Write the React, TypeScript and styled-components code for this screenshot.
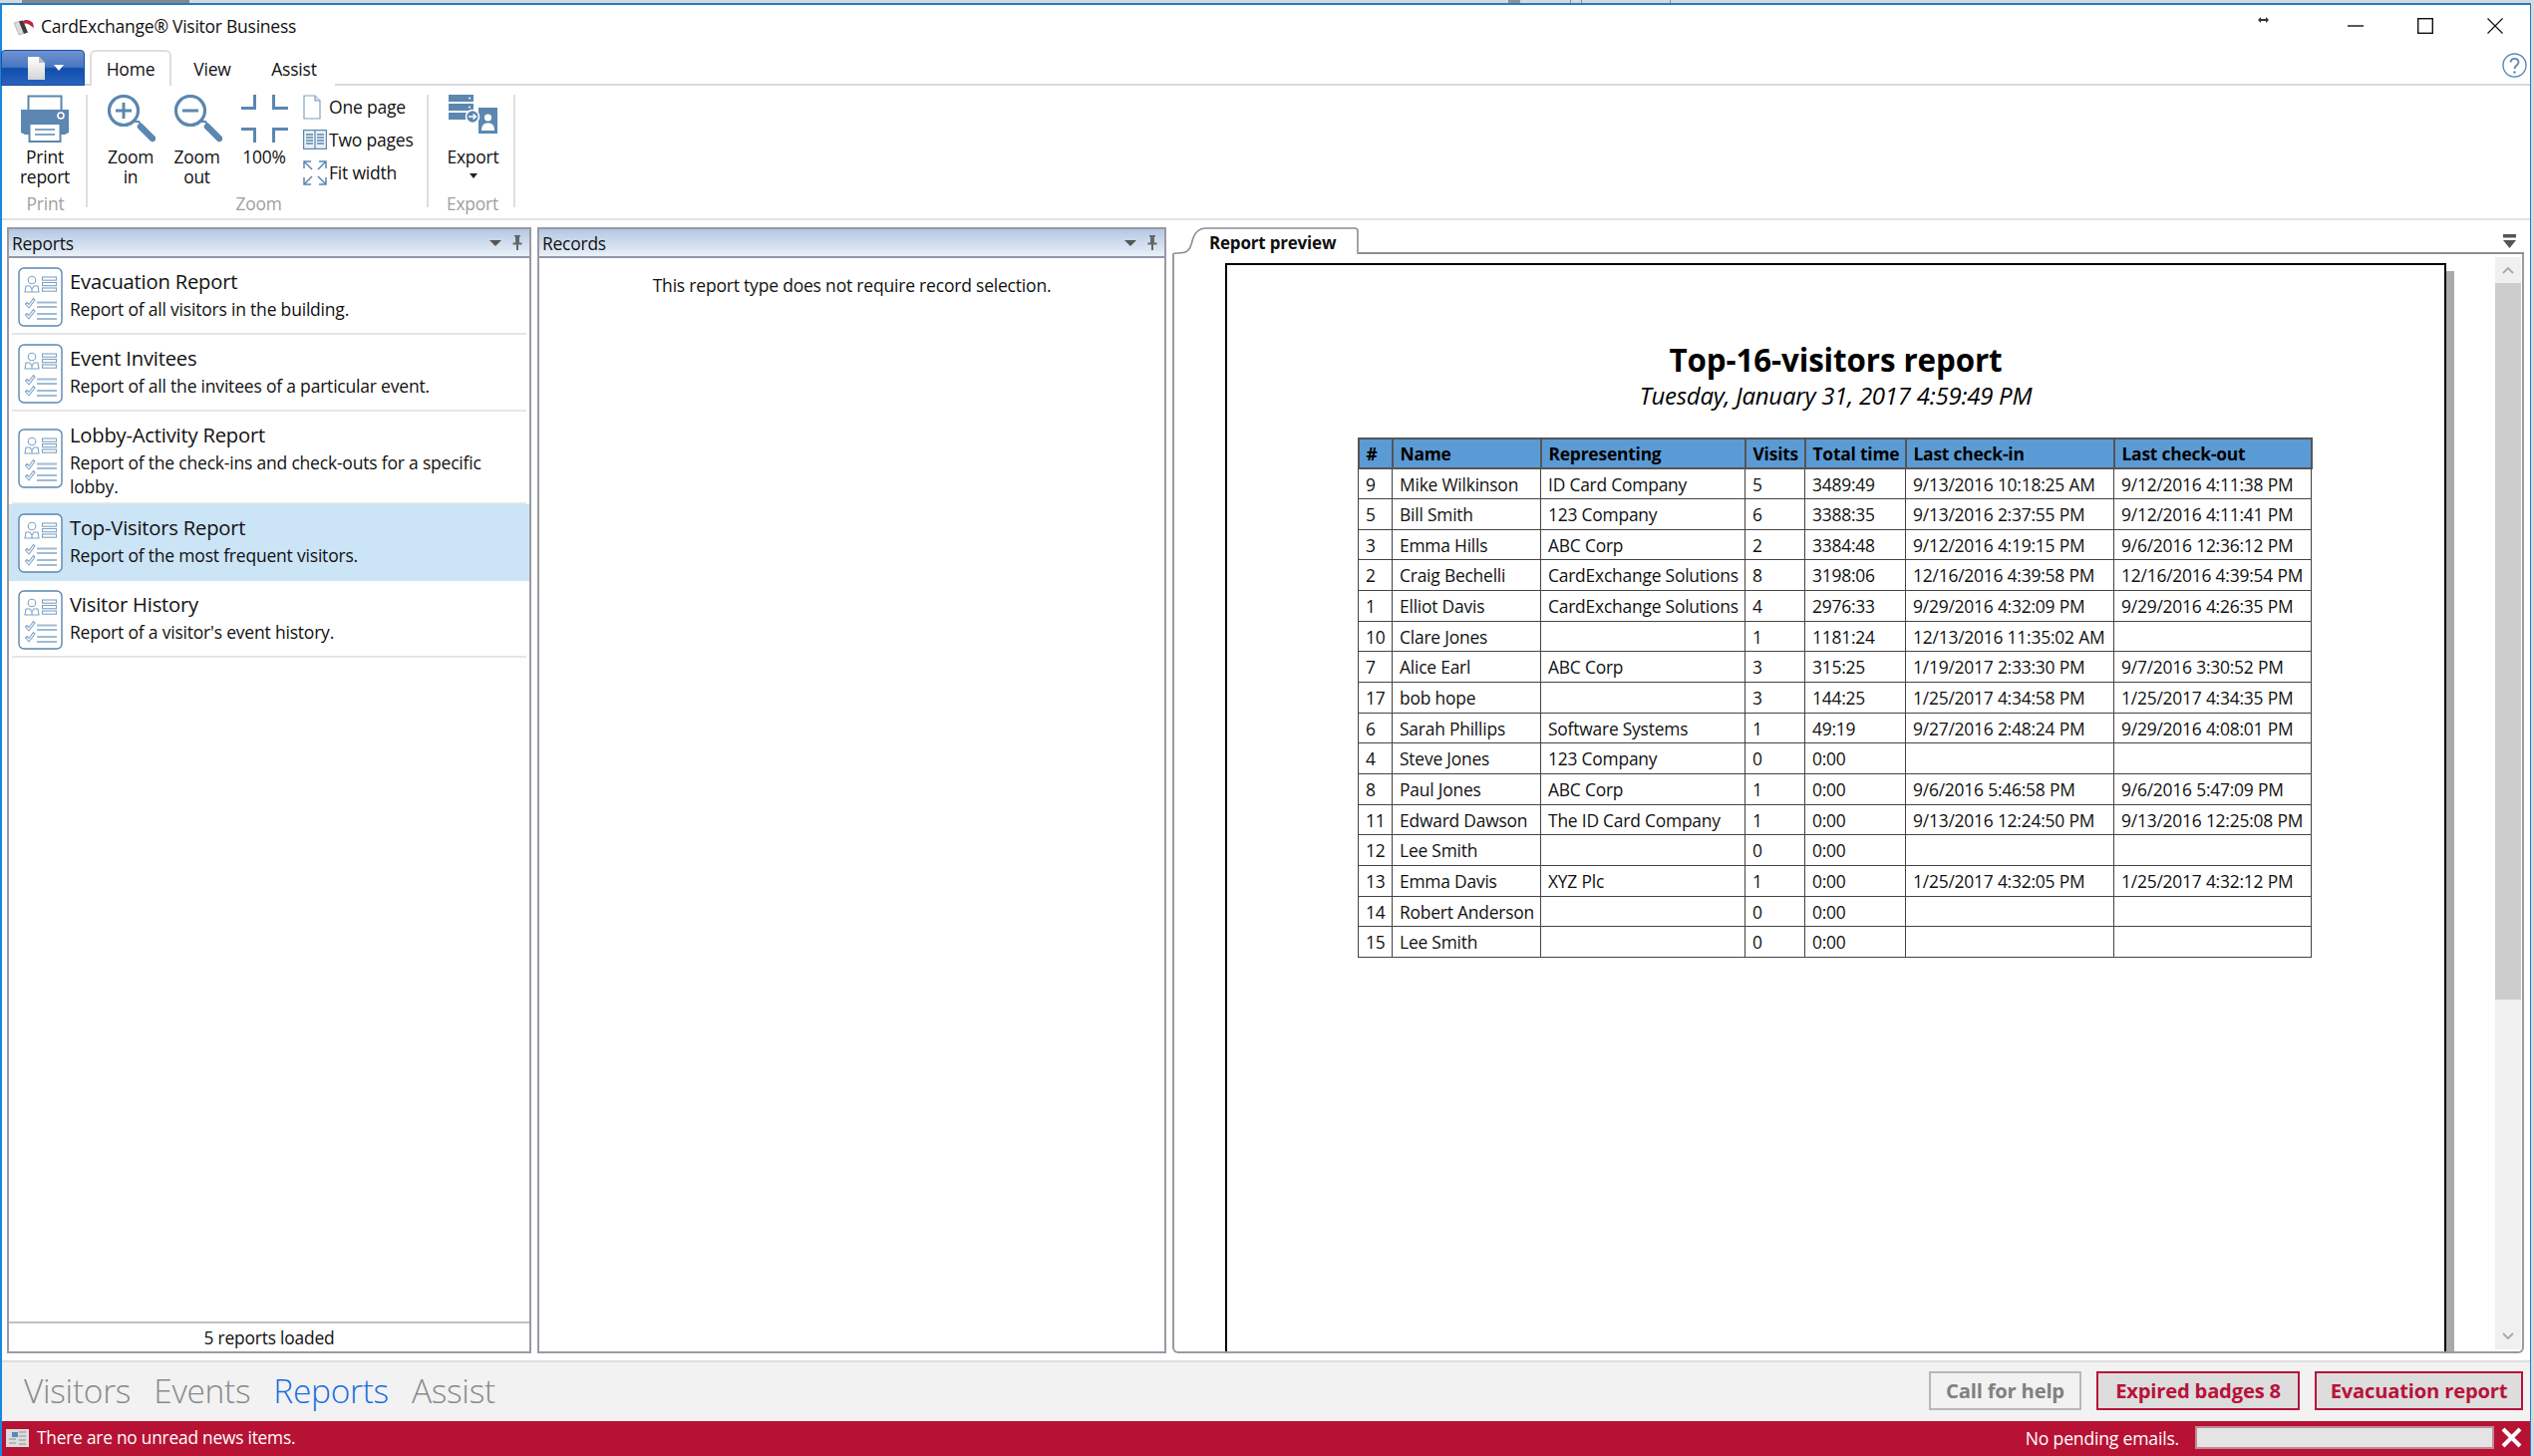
import React from 'react';
import styled, { createGlobalStyle } from 'styled-components';

const Global = createGlobalStyle`
  html, body { margin: 0; padding: 0; background: #dcdcdc; }
  * { box-sizing: border-box; }
`;

const BLUE = '#5b87b0';
const FONT = `"Open Sans", "Noto Sans", sans-serif`;

const Screen = styled.div`
  width: 2542px; height: 1461px; overflow: hidden;
  padding: 3px 3px 0 0;
  background-color: #d8d8d8;
  background-image: linear-gradient(90deg,
    transparent 22px, #868686 22px, #868686 190px, transparent 190px,
    transparent 1513px, #8f8f8f 1513px, #8f8f8f 1525px, transparent 1525px,
    transparent 1575px, #8f8f8f 1575px, #8f8f8f 1576px, transparent 1576px,
    transparent 1586px, #8f8f8f 1586px, #8f8f8f 1587px, transparent 1587px,
    transparent 1675px, #8f8f8f 1675px, #8f8f8f 1676px, transparent 1676px);
  background-size: 100% 3px;
  background-repeat: no-repeat;
  font-family: ${FONT};
  font-size: 17.4px;
  letter-spacing: -0.2px;
  color: #111;
`;
const Window = styled.div`
  height: 1458px;
  display: flex; flex-direction: column;
  background: #fff;
  border-top: 2px solid #1a7fd0;
  border-left: 2px solid #1a88e0;
  border-right: 1px solid #1a7fd0;
`;
const TitleBar = styled.div`
  height: 45px; flex: none;
  display: flex; align-items: center;
  padding-left: 11px;
`;
const TitleText = styled.div`
  margin-left: 6px; font-size: 17.5px; letter-spacing: -0.25px; flex: 1; padding-bottom: 3px;
`;
const DragGlyph = styled.div`
  margin-right: 52px; margin-top: -14px; height: 10px; display: flex;
`;
const WinButton = styled.div`
  width: 70px; height: 45px; padding-bottom: 4px;
  display: flex; align-items: center; justify-content: center;
`;
const TabRow = styled.div`
  height: 36px; flex: none; display: flex; align-items: flex-end;
  border-bottom: 2px solid #dadada;
`;
const AppButton = styled.div`
  margin-left: -1px; width: 84px; height: 36px; align-self: flex-start;
  border: 1px solid #1b4f9f; border-radius: 4px 4px 0 0;
  padding-left: 6px;
  background: linear-gradient(#6f93d1 0%, #4a75bf 48%, #0f4fae 52%, #2a62bd 100%);
  display: flex; align-items: center; justify-content: center; gap: 9px;
`;
const RibbonTab = styled.div<{ $active?: boolean }>`
  width: 82px; height: 35px; margin-bottom: -2px; font-size: 17.5px;
  display: flex; align-items: center; justify-content: center;
  background: #fff;
  ${p => p.$active ? `border: 2px solid #dedede; border-bottom: none; border-radius: 6px 6px 0 0; margin-left: 5px; height: 36px;` : ''}
`;
const HelpSlot = styled.div`
  margin-left: auto; margin-right: 3px; align-self: flex-start; margin-top: 3px; height: 25px;
`;
const Ribbon = styled.div`
  height: 135px; flex: none; display: flex; align-items: flex-start;
  padding-top: 9px;
  border-bottom: 2px solid #e2e2e2;
`;
const RibbonGroup = styled.div<{ $w: number }>`
  width: ${p => p.$w}px; height: 113px; flex: none;
  border-right: 2px solid #dedede;
  display: flex; flex-direction: column;
`;
const GroupBody = styled.div`
  flex: 1; display: flex; align-items: flex-start;
`;
const GroupLabel = styled.div`
  height: 16px; line-height: 24px; text-align: center; color: #a0a0a0; font-size: 17.4px; padding-left: 3px;
`;
const LargeButton = styled.div<{ $w: number }>`
  width: ${p => p.$w}px; flex: none;
  display: flex; flex-direction: column; align-items: center;
  line-height: 20px; text-align: center; font-size: 17.4px;
`;
const LargeIcon = styled.div`
  height: 52px; display: flex; align-items: flex-start; justify-content: center;
`;
const SmallStack = styled.div`
  margin-left: 5px; display: flex; flex-direction: column; gap: 9px;
`;
const SmallRow = styled.div`
  height: 24px; display: flex; align-items: center; font-size: 17.5px;
`;
const SmallIcon = styled.div`
  width: 26px; flex: none; display: flex; align-items: center; justify-content: flex-start;
`;
const ExportCaret = styled.div`
  width: 0; height: 0; margin: 7px auto 0;
  border-left: 4px solid transparent; border-right: 4px solid transparent; border-top: 5px solid #222;
`;
const Content = styled.div`
  flex: 1; min-height: 0; display: flex; gap: 6px;
  padding: 7px 6px 7px 5px;
`;
const Panel = styled.div<{ $w: number }>`
  width: ${p => p.$w}px; flex: none;
  display: flex; flex-direction: column;
  border: 2px solid #9a9aa4;
`;
const PanelHeader = styled.div`
  height: 29px; flex: none;
  display: flex; align-items: center;
  padding: 0 7px 0 3px;
  font-size: 17.4px;
  background: linear-gradient(#b4c8e2, #e9f0f9);
  border-bottom: 2px solid #8f97a6;
`;
const PanelTitle = styled.div` flex: 1; `;
const PanelGlyphs = styled.div` display: flex; align-items: center; gap: 11px; `;
const ReportList = styled.div` flex: 1; min-height: 0; `;
const ReportItem = styled.div<{ $selected?: boolean }>`
  position: relative;
  display: flex; align-items: center; gap: 7px;
  padding: 9px 10px 6px 9px;
  background: ${p => (p.$selected ? '#cbe4f6' : 'transparent')};
  &::after {
    content: ''; position: absolute; left: 3px; right: 3px; bottom: 0; height: 2px;
    background: ${p => (p.$selected ? 'transparent' : '#e6e6e6')};
  }
`;
const ReportGlyphBox = styled.div` flex: none; height: 62px; `;
const ReportText = styled.div` align-self: flex-start; padding-top: 1px; `;
const ReportName = styled.div` font-size: 20.2px; line-height: 26px; padding-bottom: 3px; `;
const ReportDesc = styled.div` font-size: 17.5px; line-height: 24px; `;
const PanelFooter = styled.div`
  height: 30px; flex: none; text-align: center; line-height: 28px; font-size: 17.4px;
  border-top: 2px solid #bfc0c4;
`;
const RecordsNote = styled.div`
  text-align: center; font-size: 17.5px; padding-top: 15px;
`;
const PreviewColumn = styled.div`
  flex: 1; min-width: 0; display: flex; flex-direction: column;
`;
const TabStrip = styled.div`
  height: 27px; flex: none; display: flex; align-items: flex-end; position: relative;
`;
const PreviewTab = styled.div`
  position: relative; width: 187px; height: 27px;
  font-weight: 700; font-size: 17px;
  padding: 4px 0 0 37px;
`;
const TabOutline = styled.svg`
  position: absolute; left: 0; top: 0;
`;
const TabLine = styled.div`
  flex: 1; height: 2px; background: #8c8c96;
`;
const OverflowSlot = styled.div`
  position: absolute; right: 8px; top: 2px; height: 14px;
`;
const PreviewBody = styled.div`
  flex: 1; min-height: 0; display: flex;
  border: 2px solid #9a9aa4; border-top: none;
  border-radius: 0 0 6px 6px;
`;
const PageArea = styled.div`
  flex: 1; min-width: 0; overflow: hidden; padding: 9px 0 0 51px;
`;
const Page = styled.div`
  width: 1225px; height: 1300px;
  border: 2px solid #000; border-bottom: none;
  box-shadow: 8px 8px 0 #aaaaaa;
  background: #fff;
  display: flex; flex-direction: column; align-items: center;
  padding-top: 75px;
`;
const PageTitle = styled.div`
  font-size: 31.3px; line-height: 40px; font-weight: 700; letter-spacing: -0.1px; color: #000;
`;
const PageDate = styled.div`
  font-size: 24px; line-height: 32px; font-style: italic; letter-spacing: -0.25px; margin-bottom: 26px; color: #000;
`;
const ReportTable = styled.table`
  border-collapse: collapse; table-layout: fixed; width: 956px;
  margin-right: 2px;
  font-size: 17.4px; color: #111;
`;
const Th = styled.th<{ $w: number }>`
  width: ${p => p.$w}px; height: 30px; padding: 0 0 0 7px;
  text-align: left; font-weight: 700; white-space: nowrap; color: #000;
  background: #5b9bd5;
  border: 2px solid #555;
`;
const Td = styled.td`
  height: 30.67px; padding: 0 0 0 7px; white-space: nowrap; overflow: hidden;
  border: 1.5px solid #444;
`;
const Scrollbar = styled.div`
  width: 26px; flex: none; margin: 3px 1px 2px 0;
  display: flex; flex-direction: column; background: #f0f0f0;
`;
const ScrollBtn = styled.div`
  height: 26px; flex: none; display: flex; align-items: center; justify-content: center;
`;
const ScrollThumb = styled.div`
  height: 719px; flex: none; background: #cdcdcd;
`;
const ScrollTrack = styled.div` flex: 1; `;
const BottomBar = styled.div`
  height: 61px; flex: none;
  display: flex; align-items: center;
  background: #f2f2f2;
  border-top: 2px solid #dedede;
  padding: 0 7px 3px 22px;
`;
const NavItem = styled.div<{ $active?: boolean }>`
  font-size: 33.5px; font-weight: 300; margin-right: 23px; letter-spacing: -0.3px;
  color: ${p => (p.$active ? '#1a6ee0' : '#8a8a8a')};
`;
const Spacer = styled.div` flex: 1; `;
const ActionButton = styled.div<{ $alert?: boolean; $w: number }>`
  width: ${p => p.$w}px; height: 39px; margin-left: 15px;
  display: flex; align-items: center; justify-content: center;
  font-size: 20.2px; font-weight: 700; letter-spacing: -0.2px;
  color: ${p => (p.$alert ? '#b8123a' : '#808080')};
  background: ${p => (p.$alert ? '#dddddd' : '#f2f2f2')};
  border: 2px solid ${p => (p.$alert ? '#b8123a' : '#b8b8b8')};
`;
const StatusBar = styled.div`
  height: 35px; flex: none;
  display: flex; align-items: center;
  background: #b71234; color: #fff; font-size: 17.3px;
  padding: 0 8px 2px 4px;
`;
const StatusIcon = styled.div` width: 31px; height: 18px; display: flex; `;
const StatusRight = styled.div` margin-left: auto; margin-right: 16px; font-size: 17.6px; `;
const Progress = styled.div`
  width: 300px; height: 23px; background: #e4e4e4; border: 2px solid #c08a96; margin-right: 7px;
`;

const Logo = () => (
  <svg width="22" height="17" viewBox="0 0 22 17">
    <path d="M1 4 L7 2 L12 14 L6 16 Z" fill="#dcdcdc" stroke="#a0a0a0" strokeWidth=".6" />
    <path d="M6 2.5 L10 1.5 L15 13.5 L11 15 Z" fill="#3d3d3d" />
    <path d="M10 2 C13 0 17 1 20 4 L21 9 L18 7 C16 5 13 4 11 5 Z" fill="#c2213f" />
  </svg>
);

const ReportGlyph = () => (
  <svg width="45" height="60" viewBox="0 0 45 60">
    <rect x="1" y="1" width="43" height="58" rx="5" fill="#fff" stroke={BLUE} strokeWidth="1.4" />
    <g fill="none" stroke="#7fa3c4" strokeWidth="1.1">
      <circle cx="14" cy="13" r="3.8" />
      <path d="M7 25 L8 19 H12 L14 22 L16 19 H20 L21 25 Z M14 22 V25" />
      <rect x="24.5" y="10" width="14" height="3.2" />
      <rect x="24.5" y="15.5" width="14" height="3.2" />
      <rect x="24.5" y="21" width="14" height="3.2" />
      <path d="M7.5 37 L11 41 L17 33 L15.5 31.5 L11 37.5 L9 35.5 Z" />
      <path d="M7.5 48 L11 52 L17 44 L15.5 42.5 L11 48.5 L9 46.5 Z" />
    </g>
    <g stroke="#a0bcd4" strokeWidth="2">
      <path d="M19 35.5 H39 M19 40 H39 M19 47 H39 M19 52 H39" />
    </g>
  </svg>
);

const Printer = () => (
  <svg width="48" height="48" viewBox="0 0 48 48">
    <rect x="7.5" y="1.5" width="33" height="16" fill="none" stroke={BLUE} strokeWidth="2" />
    <path d="M0 15 H48 V38 L44 40 H4 L0 38 Z" fill={BLUE} />
    <circle cx="40" cy="21" r="3" fill={BLUE} stroke="#fff" strokeWidth="1.6" />
    <rect x="8.5" y="29" width="31" height="18" fill="#fff" stroke={BLUE} strokeWidth="2" />
    <path d="M14 35 H34 M14 40 H34" stroke={BLUE} strokeWidth="1.6" />
  </svg>
);

const Magnifier = ({ plus }: { plus?: boolean }) => (
  <svg width="50" height="48" viewBox="-1 0 50 48">
    <circle cx="17" cy="16" r="14.5" fill="none" stroke={BLUE} strokeWidth="3.2" />
    <path d="M9 16 H25" stroke={BLUE} strokeWidth="3" />
    {plus && <path d="M17 8 V24" stroke={BLUE} strokeWidth="3" />}
    <path d="M28 27 L32 27 L36 32" stroke={BLUE} strokeWidth="2" fill="none" />
    <path d="M34 32 L46 44" stroke={BLUE} strokeWidth="6.5" strokeLinecap="round" />
  </svg>
);

const Brackets = () => (
  <svg width="48" height="48" viewBox="0 0 48 48" fill="none" stroke={BLUE} strokeWidth="3">
    <path d="M1 13.5 H14.5 V0" />
    <path d="M33.5 0 V13.5 H48" />
    <path d="M1 34.5 H14.5 V48" />
    <path d="M48 34.5 H33.5 V48" />
  </svg>
);

const OnePage = () => (
  <svg width="18" height="25" viewBox="0 0 18 25" fill="#fff" stroke="#7fa3c4" strokeWidth="1.2">
    <path d="M1 1 H12 L17 6 V24 H1 Z" />
    <path d="M12 1 V6 H17" fill="#dbe6f0" />
  </svg>
);

const TwoPages = () => (
  <svg width="24" height="20" viewBox="0 0 24 20" fill="#eaf1f7" stroke={BLUE} strokeWidth="1.2">
    <rect x=".6" y=".6" width="22.8" height="18.8" />
    <path d="M12 1 V19" />
    <path d="M3 5 H10 M3 8 H10 M3 11 H10 M3 14 H10 M14 5 H21 M14 8 H21 M14 11 H21 M14 14 H21" strokeWidth="1.3" />
  </svg>
);

const FitWidth = () => (
  <svg width="24" height="25" viewBox="0 0 24 25" fill="none" stroke={BLUE} strokeWidth="1.5">
    <path d="M1 8 V1 H8 M1 1 L9 9 M16 1 H23 V8 M23 1 L15 9 M1 17 V24 H8 M1 24 L9 16 M23 17 V24 H16 M23 24 L15 16" />
  </svg>
);

const ExportGlyph = () => (
  <svg width="49" height="40" viewBox="0 0 49 40">
    <g fill={BLUE}>
      <rect x="0" y="0" width="25" height="7" />
      <rect x="0" y="9" width="25" height="7" />
      <rect x="0" y="18" width="25" height="7" />
      <rect x="30" y="13" width="19" height="26" />
    </g>
    <path d="M20 3.5h2M20 12.5h2" stroke="#fff" strokeWidth="1.4" />
    <circle cx="24" cy="22" r="6.5" fill={BLUE} stroke="#fff" strokeWidth="1.6" />
    <path d="M20 22 H26 M24.5 19.5 L27.5 22 L24.5 24.5" stroke="#fff" strokeWidth="1.6" fill="none" />
    <circle cx="39.5" cy="23" r="3.6" fill="#fff" />
    <path d="M33 36 C33 30 36 28.5 39.5 28.5 C43 28.5 46 30 46 36 Z" fill="#fff" />
  </svg>
);

const PanelGlyphPair = () => (
  <PanelGlyphs>
    <svg width="12" height="6" viewBox="0 0 12 6"><path d="M0 0 H12 L6 6 Z" fill="#555" /></svg>
    <svg width="10" height="15" viewBox="0 0 10 15">
      <path d="M2 0 H8 V1.5 H7 V7.5 H9.5 V9.5 H6 V15 H4 V9.5 H.5 V7.5 H3 V1.5 H2 Z" fill="#666" />
    </svg>
  </PanelGlyphs>
);

const reports = [
  { name: 'Evacuation Report', desc: 'Report of all visitors in the building.' },
  { name: 'Event Invitees', desc: 'Report of all the invitees of a particular event.' },
  { name: 'Lobby-Activity Report', desc: 'Report of the check-ins and check-outs for a specific lobby.' },
  { name: 'Top-Visitors Report', desc: 'Report of the most frequent visitors.', selected: true },
  { name: 'Visitor History', desc: "Report of a visitor's event history." },
];

const columns: [string, number][] = [
  ['#', 34], ['Name', 149], ['Representing', 205], ['Visits', 60],
  ['Total time', 101], ['Last check-in', 209], ['Last check-out', 198],
];

const rows = [
  ['9', 'Mike Wilkinson', 'ID Card Company', '5', '3489:49', '9/13/2016 10:18:25 AM', '9/12/2016 4:11:38 PM'],
  ['5', 'Bill Smith', '123 Company', '6', '3388:35', '9/13/2016 2:37:55 PM', '9/12/2016 4:11:41 PM'],
  ['3', 'Emma Hills', 'ABC Corp', '2', '3384:48', '9/12/2016 4:19:15 PM', '9/6/2016 12:36:12 PM'],
  ['2', 'Craig Bechelli', 'CardExchange Solutions', '8', '3198:06', '12/16/2016 4:39:58 PM', '12/16/2016 4:39:54 PM'],
  ['1', 'Elliot Davis', 'CardExchange Solutions', '4', '2976:33', '9/29/2016 4:32:09 PM', '9/29/2016 4:26:35 PM'],
  ['10', 'Clare Jones', '', '1', '1181:24', '12/13/2016 11:35:02 AM', ''],
  ['7', 'Alice Earl', 'ABC Corp', '3', '315:25', '1/19/2017 2:33:30 PM', '9/7/2016 3:30:52 PM'],
  ['17', 'bob hope', '', '3', '144:25', '1/25/2017 4:34:58 PM', '1/25/2017 4:34:35 PM'],
  ['6', 'Sarah Phillips', 'Software Systems', '1', '49:19', '9/27/2016 2:48:24 PM', '9/29/2016 4:08:01 PM'],
  ['4', 'Steve Jones', '123 Company', '0', '0:00', '', ''],
  ['8', 'Paul Jones', 'ABC Corp', '1', '0:00', '9/6/2016 5:46:58 PM', '9/6/2016 5:47:09 PM'],
  ['11', 'Edward Dawson', 'The ID Card Company', '1', '0:00', '9/13/2016 12:24:50 PM', '9/13/2016 12:25:08 PM'],
  ['12', 'Lee Smith', '', '0', '0:00', '', ''],
  ['13', 'Emma Davis', 'XYZ Plc', '1', '0:00', '1/25/2017 4:32:05 PM', '1/25/2017 4:32:12 PM'],
  ['14', 'Robert Anderson', '', '0', '0:00', '', ''],
  ['15', 'Lee Smith', '', '0', '0:00', '', ''],
];

export default function App() {
  return (
    <Screen>
      <Global />
      <Window>
        <TitleBar>
          <Logo />
          <TitleText>CardExchange® Visitor Business</TitleText>
          <DragGlyph>
            <svg width="11" height="8" viewBox="0 0 11 8">
              <path d="M0 4 L3 1 V3 H8 V1 L11 4 L8 7 V5 H3 V7 Z" fill="#333" />
            </svg>
          </DragGlyph>
          <WinButton>
            <svg width="16" height="2" viewBox="0 0 16 2"><path d="M0 1 H16" stroke="#111" strokeWidth="1.4" /></svg>
          </WinButton>
          <WinButton>
            <svg width="16" height="16" viewBox="0 0 16 16"><rect x=".7" y=".7" width="14.6" height="14.6" fill="none" stroke="#111" strokeWidth="1.4" /></svg>
          </WinButton>
          <WinButton>
            <svg width="16" height="16" viewBox="0 0 16 16"><path d="M.5 .5 L15.5 15.5 M15.5 .5 L.5 15.5" stroke="#111" strokeWidth="1.2" /></svg>
          </WinButton>
        </TitleBar>
        <TabRow>
          <AppButton>
            <svg width="17" height="23" viewBox="0 0 17 23">
              <defs>
                <linearGradient id="docFill" x1="0" y1="0" x2="0" y2="1">
                  <stop offset="0" stopColor="#ffffff" />
                  <stop offset="1" stopColor="#d4d4d4" />
                </linearGradient>
              </defs>
              <path d="M0 0 H11 L17 6 V23 H0 Z" fill="url(#docFill)" />
              <path d="M11 0 V6 H17 Z" fill="#bbb" />
            </svg>
            <svg width="10" height="6" viewBox="0 0 10 6"><path d="M0 0 H10 L5 6 Z" fill="#fff" /></svg>
          </AppButton>
          <RibbonTab $active>Home</RibbonTab>
          <RibbonTab>View</RibbonTab>
          <RibbonTab>Assist</RibbonTab>
          <HelpSlot>
            <svg width="25" height="25" viewBox="0 0 25 25">
              <circle cx="12.5" cy="12.5" r="11.5" fill="none" stroke={BLUE} strokeWidth="1.4" />
              <path d="M8.5 9.5 C8.5 4.5 16.5 4.8 16.5 9.5 C16.5 12.5 12.5 12.5 12.5 16" fill="none" stroke={BLUE} strokeWidth="1.8" />
              <circle cx="12.5" cy="19.5" r="1.2" fill={BLUE} />
            </svg>
          </HelpSlot>
        </TabRow>
        <Ribbon>
          <RibbonGroup $w={86}>
            <GroupBody>
              <LargeButton $w={86}>
                <LargeIcon><Printer /></LargeIcon>
                <span>Print</span>
                <span>report</span>
              </LargeButton>
            </GroupBody>
            <GroupLabel>Print</GroupLabel>
          </RibbonGroup>
          <RibbonGroup $w={342}>
            <GroupBody>
              <LargeButton $w={10} />
              <LargeButton $w={66}>
                <LargeIcon><Magnifier plus /></LargeIcon>
                <span>Zoom</span>
                <span>in</span>
              </LargeButton>
              <LargeButton $w={67}>
                <LargeIcon><Magnifier /></LargeIcon>
                <span>Zoom</span>
                <span>out</span>
              </LargeButton>
              <LargeButton $w={68}>
                <LargeIcon><Brackets /></LargeIcon>
                <span>100%</span>
              </LargeButton>
              <SmallStack>
                <SmallRow><SmallIcon><OnePage /></SmallIcon>One page</SmallRow>
                <SmallRow><SmallIcon><TwoPages /></SmallIcon>Two pages</SmallRow>
                <SmallRow><SmallIcon><FitWidth /></SmallIcon>Fit width</SmallRow>
              </SmallStack>
            </GroupBody>
            <GroupLabel>Zoom</GroupLabel>
          </RibbonGroup>
          <RibbonGroup $w={87}>
            <GroupBody>
              <LargeButton $w={89}>
                <LargeIcon><ExportGlyph /></LargeIcon>
                <span>Export</span>
                <ExportCaret />
              </LargeButton>
            </GroupBody>
            <GroupLabel>Export</GroupLabel>
          </RibbonGroup>
        </Ribbon>
        <Content>
          <Panel $w={526}>
            <PanelHeader>
              <PanelTitle>Reports</PanelTitle>
              <PanelGlyphPair />
            </PanelHeader>
            <ReportList>
              {reports.map(r => (
                <ReportItem key={r.name} $selected={r.selected}>
                  <ReportGlyphBox><ReportGlyph /></ReportGlyphBox>
                  <ReportText>
                    <ReportName>{r.name}</ReportName>
                    <ReportDesc>{r.desc}</ReportDesc>
                  </ReportText>
                </ReportItem>
              ))}
            </ReportList>
            <PanelFooter>5 reports loaded</PanelFooter>
          </Panel>
          <Panel $w={631}>
            <PanelHeader>
              <PanelTitle>Records</PanelTitle>
              <PanelGlyphPair />
            </PanelHeader>
            <RecordsNote>This report type does not require record selection.</RecordsNote>
          </Panel>
          <PreviewColumn>
            <TabStrip>
              <PreviewTab>
                <TabOutline width="187" height="27" viewBox="0 0 187 27" fill="none" stroke="#8c8c96" strokeWidth="1.6">
                  <path d="M0 30 V28 Q0 26 6 26 C16 26 18 22 20 14 C22 6 26 1 34 1 H183 Q186 1 186 4 V27" />
                </TabOutline>
                Report preview
              </PreviewTab>
              <TabLine />
              <OverflowSlot>
                <svg width="13" height="14" viewBox="0 0 13 14">
                  <rect x="0" y="0" width="13" height="3.5" fill="#555" />
                  <path d="M0 6 H13 L6.5 14 Z" fill="#555" />
                </svg>
              </OverflowSlot>
            </TabStrip>
            <PreviewBody>
              <PageArea>
                <Page>
                  <PageTitle>Top-16-visitors report</PageTitle>
                  <PageDate>Tuesday, January 31, 2017 4:59:49 PM</PageDate>
                  <ReportTable>
                    <thead>
                      <tr>{columns.map(([label, w]) => <Th key={label} $w={w}>{label}</Th>)}</tr>
                    </thead>
                    <tbody>
                      {rows.map(row => (
                        <tr key={row[0]}>{row.map((cell, i) => <Td key={i}>{cell}</Td>)}</tr>
                      ))}
                    </tbody>
                  </ReportTable>
                </Page>
              </PageArea>
              <Scrollbar>
                <ScrollBtn>
                  <svg width="12" height="8" viewBox="0 0 12 8"><path d="M1 7 L6 2 L11 7" fill="none" stroke="#a8a8a8" strokeWidth="1.8" /></svg>
                </ScrollBtn>
                <ScrollThumb />
                <ScrollTrack />
                <ScrollBtn>
                  <svg width="12" height="8" viewBox="0 0 12 8"><path d="M1 1 L6 6 L11 1" fill="none" stroke="#a8a8a8" strokeWidth="1.8" /></svg>
                </ScrollBtn>
              </Scrollbar>
            </PreviewBody>
          </PreviewColumn>
        </Content>
        <BottomBar>
          <NavItem>Visitors</NavItem>
          <NavItem>Events</NavItem>
          <NavItem $active>Reports</NavItem>
          <NavItem>Assist</NavItem>
          <Spacer />
          <ActionButton $w={153}>Call for help</ActionButton>
          <ActionButton $alert $w={204}>Expired badges 8</ActionButton>
          <ActionButton $alert $w={209}>Evacuation report</ActionButton>
        </BottomBar>
        <StatusBar>
          <StatusIcon>
            <svg width="23" height="18" viewBox="0 0 23 18">
              <rect width="23" height="18" fill="#dcdcdc" />
              <rect x="6" y="3" width="6" height="5" fill="#5b87c0" />
              <path d="M3 10 H10 M13 3 H20 M13 7 H20 M13 11 H20 M13 15 H20 M3 14 H10" stroke="#a8a8a8" strokeWidth="1.4" />
            </svg>
          </StatusIcon>
          There are no unread news items.
          <StatusRight>No pending emails.</StatusRight>
          <Progress />
          <svg width="21" height="21" viewBox="0 0 21 21"><path d="M2 2 L19 19 M19 2 L2 19" stroke="#fff" strokeWidth="4" /></svg>
        </StatusBar>
      </Window>
    </Screen>
  );
}
